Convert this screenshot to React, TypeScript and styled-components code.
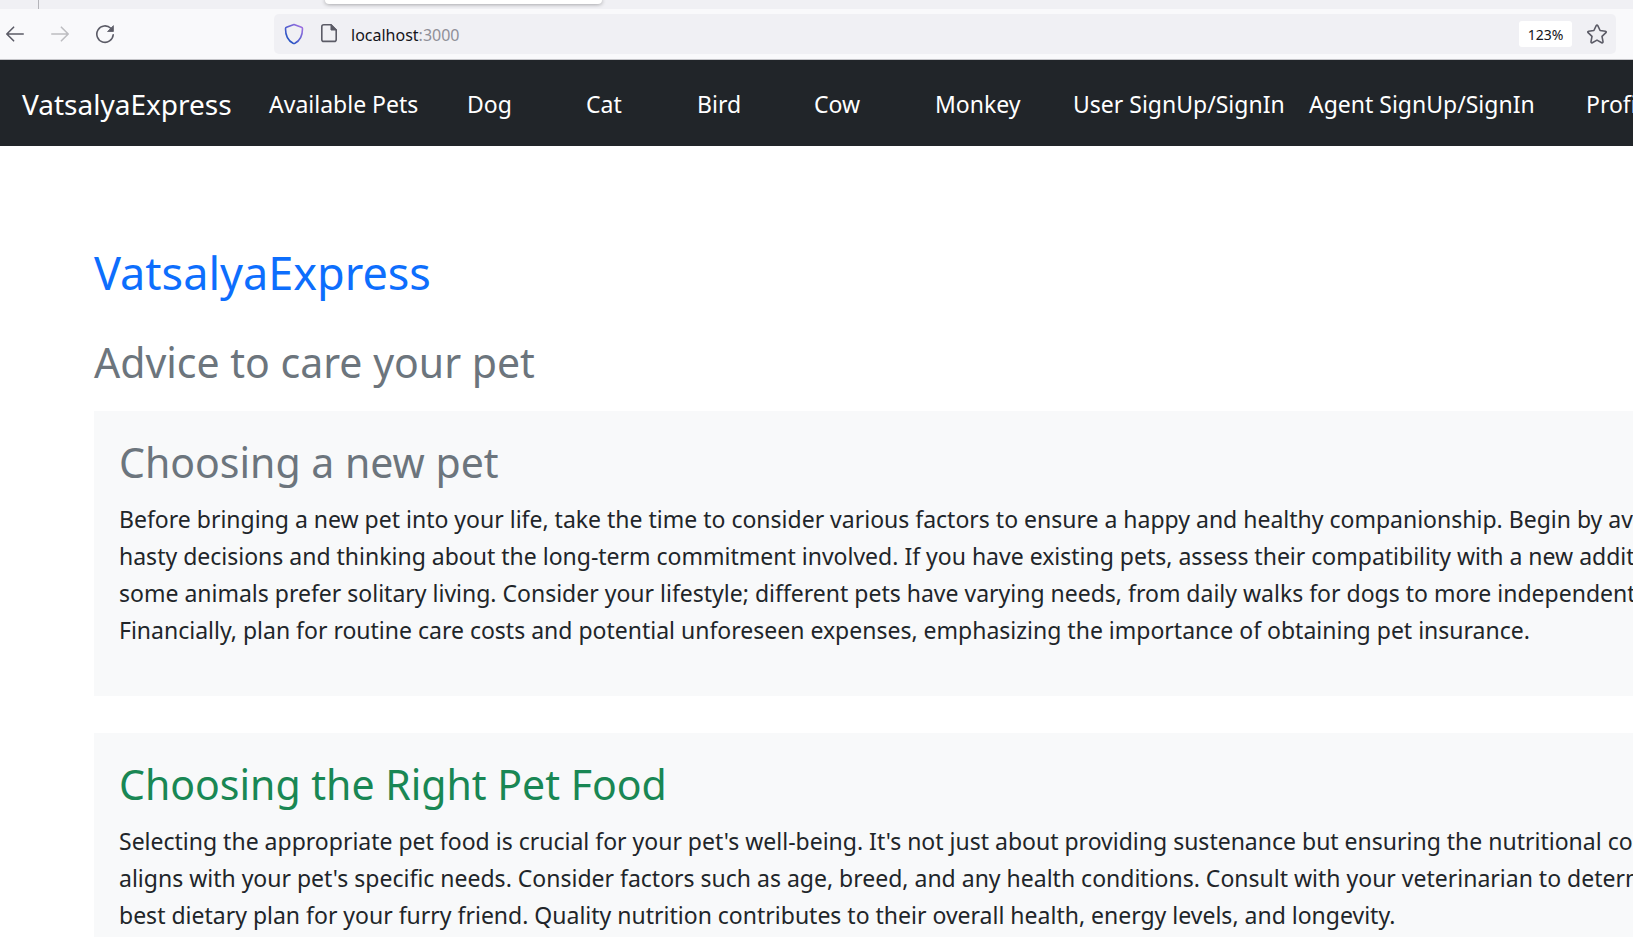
import React from "react";
import styled, { createGlobalStyle } from "styled-components";

const GlobalStyle = createGlobalStyle`
  *, *::before, *::after { box-sizing: border-box; }
  html, body { margin: 0; padding: 0; overflow: hidden; }
  body {
    background: #fff;
    color: #212529;
    font-family: "Segoe UI", "Noto Sans", sans-serif;
    font-size: 23px;
    line-height: 37px;
    height: 100vh;
  }
`;

const TabStrip = styled.div`
  display: flex;
  height: 9px;
  background: #f0f0f4;
`;

const PinnedArea = styled.div`
  width: 39px;
  border-right: 1px solid #b4b4b9;
`;

const ActiveTab = styled.div`
  width: 277px;
  height: 4px;
  margin-left: 286px;
  background: #fff;
  border-radius: 0 0 5px 5px;
  box-shadow: 0 0 4px rgba(0, 0, 0, 0.45);
`;

const Toolbar = styled.div`
  display: flex;
  align-items: center;
  height: 51px;
  padding-right: 17px;
  background: #f9f9fb;
  border-bottom: 1px solid #c4c4c8;
`;

const HistoryButtons = styled.div`
  display: flex;
  gap: 25px;
  width: 274px;
  padding-left: 5px;
`;

const IconButton = styled.button`
  display: flex;
  flex: none;
  padding: 0;
  border: 0;
  background: none;
  color: #5b5b66;

  &:disabled { color: #bdbdc1; }
`;

const AddressBar = styled.div`
  display: flex;
  flex: 1;
  align-items: center;
  height: 40px;
  padding: 0 9px 0 10px;
  background: #f0f0f4;
  border-radius: 5px;
`;

const SiteIcons = styled.div`
  display: flex;
  gap: 16px;
  margin-right: 13px;
`;

const Address = styled.div`
  flex: 1;
  padding-top: 2px;
  color: #15141a;
  font-size: 16px;
  line-height: 24px;
`;

const Port = styled.span`
  color: #8f8f98;
`;

const ZoomButton = styled.button`
  width: 53px;
  height: 26px;
  margin-right: 15px;
  padding: 0;
  border: 0;
  border-radius: 3px;
  background: #fff;
  color: #15141a;
  font: 14px/28px "Segoe UI", "Noto Sans", sans-serif;
`;

const Navbar = styled.nav`
  display: flex;
  align-items: center;
  height: 86px;
  padding: 2px 22px 0;
  overflow: hidden;
  background: #212529;
  white-space: nowrap;
`;

const Brand = styled.a`
  flex: 0 0 247px;
  color: #fff;
  font-size: 28px;
  text-decoration: none;
`;

const NavList = styled.ul`
  display: flex;
  margin: 0;
  padding: 0;
  list-style: none;
`;

const NavItem = styled.li<{ $width: number }>`
  flex: 0 0 ${(p) => p.$width}px;
`;

const NavLink = styled.a`
  color: #fff;
  text-decoration: none;
`;

const Page = styled.main`
  padding: 97px 0 0 94px;
`;

const Title = styled.h1`
  margin: 0 0 34px;
  color: #0d6efd;
  font-size: 45px;
  font-weight: 400;
  line-height: 59px;
`;

const Heading = styled.h2<{ $color?: string }>`
  margin: 0 0 12px;
  color: ${(p) => p.$color ?? "#6c757d"};
  font-size: 41px;
  font-weight: 400;
  line-height: 53px;
`;

const PageHeading = styled(Heading)`
  margin-bottom: 22px;
`;

const Card = styled.section`
  margin-bottom: 37px;
  padding: 25px;
  background: #f8f9fa;
`;

const Advice = styled.p`
  margin: 0 0 22px;
  white-space: pre;
`;

const navItems = [
  { label: "Available Pets", width: 198 },
  { label: "Dog", width: 119 },
  { label: "Cat", width: 111 },
  { label: "Bird", width: 117 },
  { label: "Cow", width: 121 },
  { label: "Monkey", width: 138 },
  { label: "User SignUp/SignIn", width: 236 },
  { label: "Agent SignUp/SignIn", width: 277 },
  { label: "Profile", width: 120 },
];

const articles = [
  {
    title: "Choosing a new pet",
    color: "#6c757d",
    lines: [
      "Before bringing a new pet into your life, take the time to consider various factors to ensure a happy and healthy companionship. Begin by avoiding",
      "hasty decisions and thinking about the long-term commitment involved. If you have existing pets, assess their compatibility with a new addition, as",
      "some animals prefer solitary living. Consider your lifestyle; different pets have varying needs, from daily walks for dogs to more independent cats.",
      "Financially, plan for routine care costs and potential unforeseen expenses, emphasizing the importance of obtaining pet insurance.",
    ],
  },
  {
    title: "Choosing the Right Pet Food",
    color: "#198754",
    lines: [
      "Selecting the appropriate pet food is crucial for your pet's well-being. It's not just about providing sustenance but ensuring the nutritional content",
      "aligns with your pet's specific needs. Consider factors such as age, breed, and any health conditions. Consult with your veterinarian to determine the",
      "best dietary plan for your furry friend. Quality nutrition contributes to their overall health, energy levels, and longevity.",
    ],
  },
];

const stroke = {
  fill: "none",
  stroke: "currentColor",
  strokeWidth: 1.6,
  strokeLinecap: "round",
  strokeLinejoin: "round",
} as const;

const BackIcon = () => (
  <svg width="20" height="20" viewBox="0 0 20 20" {...stroke}>
    <path d="M18.200 10H2M8.600 3.200L1.800 10l6.800 6.800" />
  </svg>
);

const ForwardIcon = () => (
  <svg width="20" height="20" viewBox="0 0 20 20" {...stroke}>
    <path d="M1.800 10H18M11.400 3.200l6.800 6.800-6.800 6.800" />
  </svg>
);

const ReloadIcon = () => (
  <svg width="20" height="20" viewBox="0 0 20 20" {...stroke}>
    <path d="M15.800 4.300A8.200 8.200 0 1 0 18.200 10.800" />
    <path d="M18.400 2v5.500h-5.500z" fill="currentColor" strokeWidth="0.800" />
  </svg>
);

const ShieldIcon = () => (
  <svg width="20" height="22" viewBox="0 0 20 22" {...stroke}>
    <defs>
      <linearGradient id="shield" x1="0" y1="1" x2="1" y2="0">
        <stop offset="0.200" stopColor="#2a55c4" />
        <stop offset="0.900" stopColor="#9a6fe0" />
      </linearGradient>
    </defs>
    <path
      stroke="url(#shield)"
      d="M10 1.500L17.500 4.300Q18.500 4.700 18.500 5.800C18.500 12.500 16.500 17.500 10.900 20.300Q10 20.700 9.100 20.300C3.500 17.500 1.500 12.500 1.500 5.800Q1.500 4.700 2.500 4.300Z"
    />
  </svg>
);

const PageIcon = () => (
  <svg width="18" height="20" viewBox="0 0 18 20" {...stroke} stroke="#5b5b66">
    <path d="M11 1.800H3.800Q1.800 1.800 1.800 3.800v12.600Q1.800 18.400 3.800 18.400h10.400q2 0 2-2V7z" />
    <path d="M11 1.800V7h5.200z" fill="#5b5b66" strokeWidth="1" />
  </svg>
);

const StarIcon = () => (
  <svg width="20" height="20" viewBox="0 0 20 20" {...stroke}>
    <path d="M9.200 1.600q.8-1.300 1.600 0l2.300 4.900 5.300.7q1.400.4.500 1.500l-3.900 3.700 1 5.300q0 1.500-1.300 1L10 16.100l-4.700 2.600q-1.300.5-1.300-1l1-5.300L1.100 8.700q-.9-1.100.5-1.500l5.300-.7z" />
  </svg>
);

export default function App() {
  return (
    <>
      <GlobalStyle />
      <TabStrip>
        <PinnedArea />
        <ActiveTab />
      </TabStrip>
      <Toolbar>
        <HistoryButtons>
          <IconButton aria-label="Back"><BackIcon /></IconButton>
          <IconButton aria-label="Forward" disabled><ForwardIcon /></IconButton>
          <IconButton aria-label="Reload"><ReloadIcon /></IconButton>
        </HistoryButtons>
        <AddressBar>
          <SiteIcons>
            <ShieldIcon />
            <PageIcon />
          </SiteIcons>
          <Address>localhost<Port>:3000</Port></Address>
          <ZoomButton>123%</ZoomButton>
          <IconButton aria-label="Bookmark this page"><StarIcon /></IconButton>
        </AddressBar>
      </Toolbar>
      <Navbar>
        <Brand href="#">VatsalyaExpress</Brand>
        <NavList>
          {navItems.map((item) => (
            <NavItem key={item.label} $width={item.width}>
              <NavLink href="#">{item.label}</NavLink>
            </NavItem>
          ))}
        </NavList>
      </Navbar>
      <Page>
        <Title>VatsalyaExpress</Title>
        <PageHeading>Advice to care your pet</PageHeading>
        {articles.map((article) => (
          <Card key={article.title}>
            <Heading $color={article.color}>{article.title}</Heading>
            <Advice>{article.lines.join("\n")}</Advice>
          </Card>
        ))}
      </Page>
    </>
  );
}
